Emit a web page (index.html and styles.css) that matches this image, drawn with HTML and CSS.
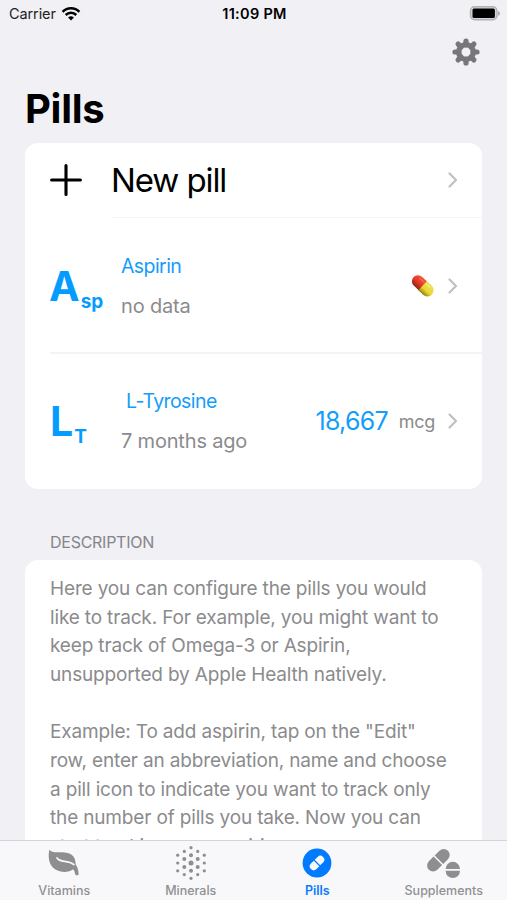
FILE: index.html
```html
<!DOCTYPE html>
<html lang="en">
<head>
<meta charset="utf-8">
<title>Pills</title>
<link rel="stylesheet" href="styles.css">
</head>
<body>
<div class="app">
  <header class="status">
    <div class="carrier"><span>Carrier</span>
      <svg width="18" height="14" viewBox="0 0 18 14" fill="none" stroke="#000" stroke-width="2.5"><path d="M.6 4.800a11.900 11.900 0 0 1 16.800 0M3.700 8a7.500 7.500 0 0 1 10.600 0"/><path d="M9 13.400l-2.900-2.900a4.300 4.300 0 0 1 5.800 0z" fill="#000" stroke="none"/></svg>
    </div>
    <div class="time">11:09 PM</div>
    <svg class="battery" width="31" height="15" viewBox="0 0 31 15"><rect x="1.500" y=".8" width="26.400" height="13" rx="4" fill="#d5d5d8" stroke="#b2b2b5" stroke-width="1.400"/><rect x="3.500" y="2.600" width="22.400" height="9.400" rx="1.500" fill="#000"/><path d="M29 5v4.800q2-.8 2-2.400t-2-2.400z" fill="#aaaaad"/></svg>
  </header>
  <div class="toolbar">
    <svg width="28" height="28" viewBox="-14 -14 28 28"><g stroke="#77777a" stroke-width="5.200" stroke-linecap="round"><path d="M0-11V-7M0 11V7M-11 0H-7M11 0H7M-7.900-7.900l3 3M7.900 7.900l-3-3M-7.900 7.900l3-3M7.900-7.900l-3 3"/></g><circle r="7.400" fill="none" stroke="#77777a" stroke-width="5.200"/></svg>
  </div>
  <h1>Pills</h1>
  <main>
    <section class="card list">
      <div class="row new">
        <svg class="plus" width="32" height="32" viewBox="0 0 32 32"><path d="M16 1.600v28.800M1.600 16h28.800" stroke="#000" stroke-width="3.100" stroke-linecap="round"/></svg>
        <span class="new-label">New pill</span>
        <svg class="chev" width="10" height="16" viewBox="0 0 10 16"><path d="M1.500 1.500L8 8l-6.500 6.500"/></svg>
      </div>
      <div class="row pill">
        <div class="abbr"><b>A</b><small>sp</small></div>
        <div class="info"><div class="name">Aspirin</div><div class="when">no data</div></div>
        <svg class="capsule" width="24" height="24" viewBox="0 0 24 24"><defs><linearGradient id="r" x1="0" y1="0" x2="0" y2="1"><stop offset="0" stop-color="#f4523c"/><stop offset=".55" stop-color="#e33a25"/><stop offset="1" stop-color="#8d2413"/></linearGradient><linearGradient id="y" x1="0" y1="0" x2="0" y2="1"><stop offset="0" stop-color="#efe055"/><stop offset=".6" stop-color="#ead638"/><stop offset="1" stop-color="#91810e"/></linearGradient></defs><g transform="rotate(43 12 12)"><path d="M12 6H5a6 6 0 0 0 0 12h7z" fill="url(#r)"/><path d="M11.500 5.700H18a6.300 6.300 0 0 1 0 12.600h-6.500z" fill="url(#y)"/><path d="M4.500 8.500H10" stroke="#f8705a" stroke-width="1.200" stroke-linecap="round"/><path d="M13 8.500h5" stroke="#f8ee86" stroke-width="1.200" stroke-linecap="round"/></g></svg>
        <svg class="chev" width="10" height="16" viewBox="0 0 10 16"><path d="M1.500 1.500L8 8l-6.500 6.500"/></svg>
      </div>
      <div class="row pill">
        <div class="abbr lt"><b>L</b><small>T</small></div>
        <div class="info"><div class="name tyrosine">L-Tyrosine</div><div class="when months">7 months ago</div></div>
        <span class="amount">18,667</span><span class="unit">mcg</span>
        <svg class="chev" width="10" height="16" viewBox="0 0 10 16"><path d="M1.500 1.500L8 8l-6.500 6.500"/></svg>
      </div>
    </section>
    <h2>DESCRIPTION</h2>
    <section class="card description">
      <p>Here you can configure the pills you would<br>like to track. For example, you might want to<br>keep track of Omega-3 or Aspirin,<br>unsupported by Apple Health natively.</p>
      <p>Example: To add aspirin, tap on the "Edit"<br>row, enter an abbreviation, name and choose<br>a pill icon to indicate you want to track only<br>the number of pills you take. Now you can<br>start tracking your aspirin</p>
    </section>
  </main>
  <nav>
    <div class="tab">
      <svg width="34" height="34" viewBox="0 0 34 34"><path d="M2.300 3.700C4.500 6.800 9 6.200 15 6.200 23 6.200 29 9.500 28.600 18.500 30.300 20.500 31.800 24.500 31.600 28.700 29.800 30 28.200 29.300 27.900 27.200 27.600 25.300 27 24.100 26 23.300 22 26.800 14 27 8.500 23.600 1.200 19 1 10 2.300 3.700z" fill="#8e8e90"/><path d="M10 12C13 17.200 21 13.400 26.800 18.600" fill="none" stroke="#f8f8fa" stroke-width="1.700" stroke-linecap="round"/></svg>
      <span>Vitamins</span>
    </div>
    <div class="tab">
      <svg width="34" height="34" viewBox="-17 -17 34 34" fill="#8e8e90"><circle r="2.500"/><g><circle cy="-7.800" r="2"/><circle cy="7.800" r="2"/><circle cx="-6.700" cy="-3.900" r="2"/><circle cx="6.700" cy="-3.900" r="2"/><circle cx="-6.700" cy="3.900" r="2"/><circle cx="6.700" cy="3.900" r="2"/></g><circle cy="-15.300" r="1.600"/><circle cy="15.300" r="1.600"/><circle cx="-6.700" cy="-11.600" r="1.600"/><circle cx="6.700" cy="-11.600" r="1.600"/><circle cx="-6.700" cy="11.600" r="1.600"/><circle cx="6.700" cy="11.600" r="1.600"/><circle cx="-13.300" cy="-7.800" r="1.600"/><circle cx="13.300" cy="-7.800" r="1.600"/><circle cx="-13.300" r="1.600"/><circle cx="13.300" r="1.600"/><circle cx="-13.300" cy="7.800" r="1.600"/><circle cx="13.300" cy="7.800" r="1.600"/></svg>
      <span>Minerals</span>
    </div>
    <div class="tab active">
      <svg width="34" height="34" viewBox="-17 -17 34 34"><circle r="14.400" fill="#007aff"/><g transform="rotate(-45)" fill="#f8f8fa"><path d="M-.6-3.900H-4.700a3.900 3.900 0 0 0 0 7.800H-.6zM.6-3.900H4.700a3.900 3.900 0 0 1 0 7.800H.6z"/></g></svg>
      <span>Pills</span>
    </div>
    <div class="tab">
      <svg width="34" height="34" viewBox="0 0 34 34" fill="#8e8e90"><g transform="translate(11.400 14.200) rotate(-45)"><path d="M-.8-6H-7.500a6 6 0 0 0 0 12H-.8zM.8-6H7.500a6 6 0 0 1 0 12H.8z"/></g><path d="M18.600 23a7.200 7.200 0 0 1 14.400 0zM18.600 24.800a7.200 7.200 0 0 0 14.400 0z"/></svg>
      <span>Supplements</span>
    </div>
  </nav>
</div>
</body>
</html>
```

FILE: styles.css
```css
* { box-sizing: border-box; }
body { margin: 0; background: #f1f0f5; font-family: Inter, "Liberation Sans", sans-serif; color: #000; }
svg { display: block; flex: none; overflow: visible; }
.app { width: 507px; height: 900px; overflow: hidden; display: flex; flex-direction: column; }
.status { height: 28px; flex: none; display: grid; grid-template-columns: 1fr auto 1fr; align-items: center; padding: 0 7px 1px 9px; }
.carrier { display: flex; align-items: center; gap: 6px; font-size: 14.5px; letter-spacing: -.1px; color: #222; }
.time { font-size: 14.5px; font-weight: 600; letter-spacing: .3px; }
.battery { justify-self: end; }
.toolbar { height: 50px; flex: none; display: flex; justify-content: flex-end; padding: 10px 27px 0 0; }
h1 { margin: 0; height: 65px; flex: none; padding: 6px 0 0 25px; font-size: 40px; line-height: 50px; font-weight: 700; letter-spacing: -.3px; }
main { flex: 1; min-height: 0; overflow: hidden; padding: 0 25px; }
.card { background: #fff; border-radius: 13px; width: 457px; }
.row { display: flex; align-items: center; padding: 0 24px 0 25px; position: relative; }
.new { height: 75px; }
.pill { height: 135.5px; }
.row:not(:last-child)::after { content: ""; position: absolute; right: 0; bottom: 0; left: 25px; height: 1.5px; background: #f4f4f6; }
.new:not(:last-child)::after { left: 86px; }
.new .plus, .new .chev { margin-bottom: 1px; }
.new-label { margin: 0 0 2px 29px; font-size: 33px; letter-spacing: -1.1px; flex: 1; white-space: nowrap; }
.chev { fill: none; stroke: #c0c0c3; stroke-width: 2.2; stroke-linecap: round; stroke-linejoin: round; }
.abbr { width: 71px; display: flex; align-items: baseline; color: #059cff; white-space: nowrap; }
.abbr b { font-size: 41px; line-height: 50px; margin-left: -1px; }
.abbr small { font-size: 19px; font-weight: 700; line-height: 20px; position: relative; top: 7px; margin-left: 1px; }
.lt b { margin-left: 0; }
.info { flex: 1; white-space: nowrap; }
.name, .when { font-size: 20px; line-height: 40px; }
.name { color: #149dfa; font-size: 19.5px; letter-spacing: -.58px; }
.tyrosine { padding-left: 5px; }
.when { color: #8b8b8d; letter-spacing: -.18px; }
.capsule { margin-right: 13px; }
.amount { color: #149dfa; font-size: 25px; letter-spacing: -.75px; position: relative; left: 1px; }
.unit { color: #8b8b8d; font-size: 18px; margin: 0 13px 0 12px; letter-spacing: -.3px; }
h2 { margin: 0; height: 71px; padding: 42px 0 0 25px; font-size: 16px; line-height: 23px; font-weight: 400; color: #858589; letter-spacing: -.26px; }
.description { padding: 15px 0 0 25px; height: 330px; white-space: nowrap; color: #8b8b8d; font-size: 19px; line-height: 28.65px; letter-spacing: -.16px; }
p { margin: 0 0 28.65px; }
nav { height: 60px; flex: none; border-top: 1.5px solid #d5d5d8; background: #f8f8fa; display: grid; grid-template-columns: repeat(4, 126.5px); padding-left: 1px; }
.tab { display: flex; flex-direction: column; align-items: center; color: #909092; padding-top: 5px; font-size: 12.5px; font-weight: 500; line-height: 22px; }
.tab span { white-space: nowrap; }
.active { color: #087cff; font-weight: 600; }
```
